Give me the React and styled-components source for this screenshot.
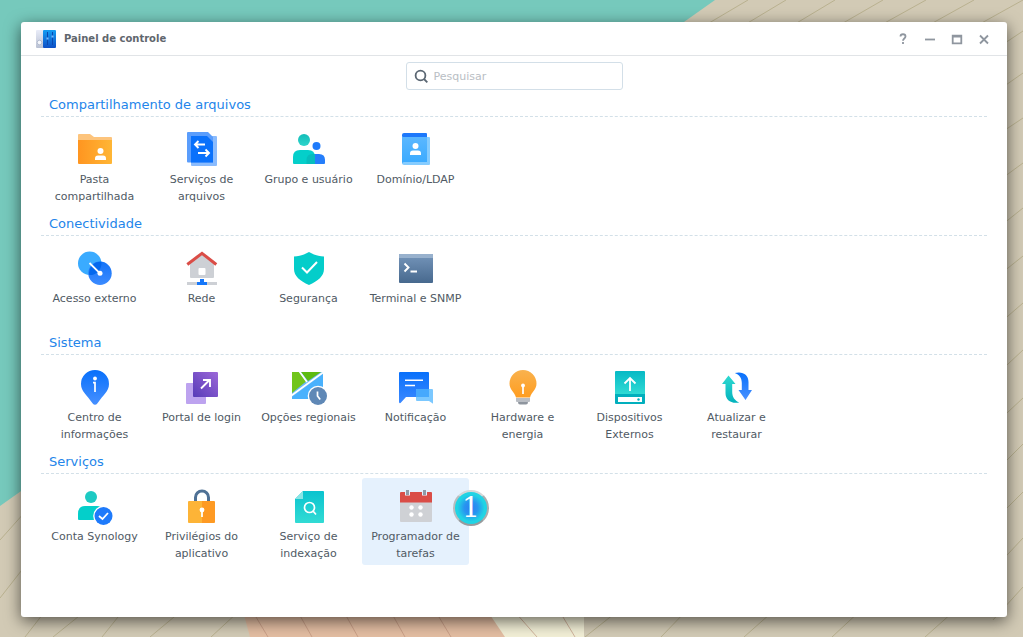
import React from 'react'
import styled, { createGlobalStyle } from 'styled-components'

const GlobalStyle = createGlobalStyle`
  * {
    box-sizing: border-box;
  }
  body {
    margin: 0;
    font-family: "DejaVu Sans", Verdana, sans-serif;
    font-size: 11px;
    color: #505a64;
  }
  button, input {
    font: inherit;
    color: inherit;
  }
`

const Desktop = styled.div`
  display: grid;
  grid-template-columns: minmax(0, 1fr);
  min-height: 100vh;
  background: #cfc8b2;
`

const WallpaperArt = styled.svg`
  grid-area: 1 / 1;
  width: 100%;
  height: 0;
  min-height: 100%;
`

const Window = styled.main`
  grid-area: 1 / 1;
  z-index: 1;
  display: flex;
  flex-direction: column;
  margin: 22px 16px 20px 21px;
  background: #fff;
  border-radius: 3px;
  box-shadow: 0 4px 16px rgba(0, 0, 0, 0.6);
`

const TitleBar = styled.header`
  display: flex;
  align-items: center;
  height: 34px;
  padding: 0 15px;
  border-bottom: 1px solid #e1e4e7;
`

const Title = styled.h1`
  flex: 1;
  margin: 0 0 0 8px;
  font-size: 10px;
  font-weight: 700;
  color: #5f666d;
`

const WindowControls = styled.div`
  display: flex;
  gap: 11px;
`

const ControlButton = styled.button`
  display: flex;
  width: 16px;
  height: 16px;
  padding: 0;
  border: none;
  background: none;
  color: #8f969f;
`

const Toolbar = styled.div`
  display: flex;
  justify-content: center;
  padding: 6px 0 7px;
`

const SearchBox = styled.label`
  display: flex;
  align-items: center;
  gap: 5px;
  width: 217px;
  height: 28px;
  padding: 0 7px;
  border: 1px solid #d3dfe8;
  border-radius: 3px;
`

const SearchInput = styled.input`
  flex: 1;
  min-width: 0;
  padding: 0;
  border: none;
  outline: none;
  background: none;
  &::placeholder {
    color: #b9bec4;
    opacity: 1;
  }
`

const Content = styled.div`
  display: flex;
  flex-direction: column;
  gap: 8px;
  padding: 0 20px 20px;
`

const SectionTitle = styled.h2`
  margin: 0 0 4px;
  padding: 0 8px 3px;
  border-bottom: 1px dashed #d3e0e8;
  font-size: 13px;
  font-weight: 400;
  line-height: 16px;
  color: #2385ea;
`

const Tiles = styled.div`
  display: flex;
  flex-wrap: wrap;
`

const Tile = styled.button`
  position: relative;
  display: flex;
  flex-direction: column;
  align-items: center;
  gap: 4px;
  width: 107px;
  min-height: 87px;
  padding: 10px 4px 3px;
  border: none;
  border-radius: 3px;
  background: ${props => props.$active ? '#e5f1fd' : 'none'};
  line-height: 17px;
  text-align: center;
`

const Badge = styled.span`
  position: absolute;
  top: 12px;
  left: 91px;
  display: flex;
  align-items: center;
  justify-content: center;
  width: 36px;
  height: 36px;
  border: 2px solid;
  border-color: #d3d7d8 #a9adaf #979b9d #b9bdbf;
  border-radius: 50%;
  background: radial-gradient(circle, #2b7ff2 0%, #2894f0 30%, #20d4e4 60%);
  color: #fff;
  font-family: "DejaVu Serif", serif;
  font-size: 28px;
  line-height: 32px;
`

const Gradient = ({ id, from, to, flat }) => (
  <linearGradient id={id} x1='0' y1='0' x2={flat ? 1 : 0} y2={flat ? 0 : 1}>
    <stop stopColor={from} />
    <stop offset='1' stopColor={to} />
  </linearGradient>
)

const Icon = ({ children }) => (
  <svg width='36' height='36' viewBox='0 0 36 36' fill='none' overflow='visible' aria-hidden='true'>{children}</svg>
)

const SharedFolderIcon = () => (
  <Icon>
    <Gradient id='folder' from='#ff9520' to='#ffb635' flat />
    <path d='M1 4a1 1 0 0 1 1-1h11l4 3h17a1 1 0 0 1 1 1v8H1z' fill='#fdc47c' />
    <path d='M1 9h34v23a1 1 0 0 1-1 1H2a1 1 0 0 1-1-1z' fill='url(#folder)' />
    <circle cx='23.5' cy='20' r='3' fill='#fff' />
    <path d='M18 29v-1.500q0-3 3-3h5q3 0 3 3V29z' fill='#fff' />
  </Icon>
)

const FileServicesIcon = () => (
  <Icon>
    <path d='M7 5h25q1 0 1 1v28a1 1 0 0 1-1 1H8a1 1 0 0 1-1-1z' fill='#8abbfd' />
    <path d='M3 2a1 1 0 0 1 1-1h20l5 5v25.500H4a1 1 0 0 1-1-1z' fill='#5a9dfc' />
    <path d='M7 5h16l6 6v20.500H7z' fill='#0a71fb' />
    <path d='M21 13.500H11M14.500 10L11 13.500l3.500 3.500M14 22h11M21.500 18.500L25 22l-3.500 3.500' stroke='#fff' strokeWidth='1.900' />
  </Icon>
)

const UsersIcon = () => (
  <Icon>
    <Gradient id='userHead' from='#13bdb8' to='#2ed5cc' />
    <circle cx='25.500' cy='15' r='4' fill='#1f7bfb' />
    <path d='M15 33v-4q0-6 6-6h7q6 0 6 6v3q0 1-1 1z' fill='#257efb' />
    <circle cx='13' cy='9' r='6' fill='url(#userHead)' />
    <path d='M2 32v-6q0-7 7-7h8q7 0 7 7v7H3q-1 0-1-1z' fill='#04cfca' />
    <path d='M15.500 33v-4q0-6 6-6h1.800q.7 1.500.7 3v7z' fill='#06bdbd' />
  </Icon>
)

const DomainIcon = () => (
  <Icon>
    <Gradient id='book' from='#5cb8ff' to='#39aaff' />
    <path d='M4 4q0-2 2-2h22q1 0 1 1v4H4z' fill='#1d78fb' />
    <path d='M4 5q0 1 1 1h26q1 0 1 1v26q0 1-1 1H6q-2 0-2-2z' fill='#85ccff' />
    <path d='M4 5q0 1 1 1h24v25H6q-2 0-2 2z' fill='url(#book)' />
    <circle cx='17.500' cy='15' r='3' fill='#fff' />
    <path d='M12 24v-1.500q0-3 3-3h5q3 0 3 3V24z' fill='#fff' />
  </Icon>
)

const ExternalAccessIcon = () => (
  <Icon>
    <Gradient id='access' from='#1474f8' to='#3c8bff' />
    <circle cx='12.700' cy='13.300' r='11.700' fill='#3aabff' />
    <circle cx='23' cy='23.300' r='11.700' fill='url(#access)' />
    <path d='M12.200 25A11.700 11.700 0 0 1 24.400 11.700 11.700 11.700 0 0 1 12.200 25z' fill='#0468ee' />
    <path d='M12.500 13L23 23.300' stroke='#fff' strokeWidth='1.800' />
    <circle cx='23' cy='23.300' r='2.500' fill='#fff' />
  </Icon>
)

const NetworkIcon = () => (
  <Icon>
    <path d='M6 13L18 4l12 9v14q0 1-1 1H7q-1 0-1-1z' fill='#cdd0d5' />
    <path d='M14.500 24v-5q0-1 1-1h5q1 0 1 1v5q0 1-1 1h-5q-1 0-1-1z' fill='#fff' />
    <path d='M3.300 14.500L18 3.300l14.300 11.200' stroke='#da4d47' strokeWidth='3' />
    <path d='M3 32h30v3H3z' fill='#cdd0d5' />
    <path d='M13 32h3v-3h4v3h3v3H13z' fill='#1577fa' />
  </Icon>
)

const SecurityIcon = () => (
  <Icon>
    <path d='M18 2C13 5 8 6.500 3 6.500V19c0 7 6 12 15 16 9-4 15-9 15-16V6.500C28 6.500 23 5 18 2z' fill='#04cdca' />
    <path d='M11 17.500l5 5 10-10.500' stroke='#fff' strokeWidth='2' />
  </Icon>
)

const TerminalIcon = () => (
  <Icon>
    <Gradient id='terminal' from='#7595ba' to='#47698e' />
    <rect x='1' y='4' width='34' height='29' rx='1' fill='url(#terminal)' />
    <path d='M1 8V5q0-1 1-1h32q1 0 1 1v3z' fill='#98b1cd' />
    <path d='M6.500 13.500l4 4-4 4M12.500 21.500h6.500' stroke='#fff' strokeWidth='1.900' />
  </Icon>
)

const InfoIcon = () => (
  <Icon>
    <Gradient id='info' from='#0870fb' to='#4790ff' />
    <path d='M18 1a14 14 0 0 1 14 14c0 7.500-6 11-11.500 19.300q-2.500 3-5 0C10 26 4 22.500 4 15A14 14 0 0 1 18 1z' fill='url(#info)' />
    <circle cx='18' cy='9.500' r='1.900' fill='#fff' />
    <path d='M16 13.700h2V23' stroke='#fff' strokeWidth='1.700' />
  </Icon>
)

const LoginPortalIcon = () => (
  <Icon>
    <linearGradient id='portal' x1='0' y1='1' x2='1' y2='0'>
      <stop stopColor='#573bb8' />
      <stop offset='1' stopColor='#9c68d8' />
    </linearGradient>
    <rect x='2' y='14' width='20' height='21' rx='1' fill='#bda3ef' />
    <rect x='9' y='3' width='25' height='25' rx='1' fill='url(#portal)' />
    <path d='M17 19.500l8.500-8.500M19 11h7v7' stroke='#fff' strokeWidth='1.900' />
  </Icon>
)

const RegionalIcon = () => (
  <Icon>
    <path d='M1 3h31v27H1z' fill='#6cb9fb' />
    <path d='M1 30V28L32 5v25z' fill='#49b1fd' />
    <path d='M1 3h7l7 9.500L1 24z' fill='#71c51b' />
    <path d='M10 3h20L17 12z' fill='#5dbb11' />
    <path d='M.500 26.500L32 3.500M8.500 2.500L16 13' stroke='#fff' strokeWidth='1.700' />
    <circle cx='27' cy='27' r='10.300' fill='#fff' />
    <circle cx='27' cy='27' r='9' fill='#5f88b6' />
    <path d='M26.500 22.500V27l2.700 3.500' stroke='#fff' strokeWidth='1.700' />
  </Icon>
)

const NotificationIcon = () => (
  <Icon>
    <Gradient id='bubble' from='#0870fb' to='#3c89ff' />
    <path d='M1 4q0-1 1-1h28q1 0 1 1v24H8l-5.500 6Q1 34.500 1 33z' fill='url(#bubble)' />
    <path d='M19 20h15q1 0 1 1v13q0 1-1 0l-3-2H19q-1 0-1-1V21q0-1 1-1z' fill='#7bc8ff' />
    <path d='M18 21q0-1 1-1h12v8H18z' fill='#46a9fd' />
    <path d='M7 11.200h18M7 16.500h10' stroke='#fff' strokeWidth='1.600' />
  </Icon>
)

const HardwareIcon = () => (
  <Icon>
    <Gradient id='bulb' from='#f9b24e' to='#ff9d20' />
    <path d='M18 1a13.500 13.500 0 0 1 13.500 13.500c0 6.500-5 8-6.500 14H11c-1.500-6-6.500-7.500-6.500-14A13.500 13.500 0 0 1 18 1z' fill='url(#bulb)' />
    <path d='M11 29h14v3q0 1-1 1H12q-1 0-1-1z' fill='#b9bdc3' />
    <path d='M13 33h10q0 2.500-2 2.500h-6q-2 0-2-2.500z' fill='#8e959e' />
    <circle cx='18' cy='16.500' r='1.900' fill='#fff' />
    <path d='M18 17v8' stroke='#fff' strokeWidth='1.700' />
  </Icon>
)

const ExternalDevicesIcon = () => (
  <Icon>
    <Gradient id='device' from='#06b9c5' to='#32dcd5' />
    <path d='M3 3q0-1 1-1h28q1 0 1 1v23H3z' fill='url(#device)' />
    <path d='M3 25h30v9q0 1-1 1H4q-1 0-1-1z' fill='#02afbd' />
    <path d='M6 28h24v5H6z' fill='#fff' />
    <circle cx='26.500' cy='30.500' r='1.200' fill='#02afbd' />
    <path d='M18 22V9.500M12.500 14.500L18 9l5.500 5.500' stroke='#fff' strokeWidth='1.800' />
  </Icon>
)

const UpdateIcon = () => (
  <Icon>
    <Gradient id='updateUp' from='#2fd9d0' to='#03b2bd' />
    <Gradient id='updateDown' from='#0870fb' to='#4b92ff' />
    <path d='M9.500 6.500L16.500 15h-3.300v8c0 5 2.500 8.500 7 10.500C12 35 6.500 31 6.500 24v-9H3z' fill='url(#updateUp)' />
    <path d='M26.500 31L19.500 21h3.300v-7c0-5-2.500-8.500-7-10C24 2 29.500 6 29.500 13v8H33z' fill='url(#updateDown)' />
  </Icon>
)

const AccountIcon = () => (
  <Icon>
    <circle cx='14' cy='9' r='6' fill='#1dcac3' />
    <path d='M1 31v-5q0-8 7-8h12q6 0 6 7v7H2q-1 0-1-1z' fill='#04cfca' />
    <circle cx='26.500' cy='28' r='10.300' fill='#fff' />
    <circle cx='26.500' cy='28' r='9' fill='#1e7afb' />
    <path d='M22 28l3.500 3 5.500-6' stroke='#fff' strokeWidth='1.800' />
  </Icon>
)

const PrivilegesIcon = () => (
  <Icon>
    <path d='M11.500 14V9.500a6.500 6.500 0 0 1 13 0V14' stroke='#4f7195' strokeWidth='3' />
    <path d='M4 14q0-1 1-1h13v22H5q-1 0-1-1z' fill='#fdb437' />
    <path d='M18 13h12q1 0 1 1v20q0 1-1 1H18z' fill='#fe9a23' />
    <circle cx='18' cy='22' r='2.400' fill='#fff' />
    <path d='M18 22v7' stroke='#fff' strokeWidth='1.800' />
  </Icon>
)

const IndexingIcon = () => (
  <Icon>
    <Gradient id='index' from='#0ac3cf' to='#32dbd4' />
    <path d='M12 3h20q1 0 1 1v30q0 1-1 1H5q-1 0-1-1V11z' fill='url(#index)' />
    <path d='M12 3v8H4z' fill='#8be5e5' />
    <circle cx='18.500' cy='19.500' r='5' stroke='#fff' strokeWidth='1.700' />
    <path d='M22 23l3 3.500' stroke='#fff' strokeWidth='1.700' />
  </Icon>
)

const SchedulerIcon = () => (
  <Icon>
    <path d='M2 14h32v19q0 1-1 1H3q-1 0-1-1z' fill='#cfd1d5' />
    <path d='M2 5q0-1 1-1h30q1 0 1 1v9.500H2z' fill='#da4d47' />
    <path d='M9.500 2v5.500M26.500 2v5.500' stroke='#e5f1fd' strokeWidth='5' />
    <path d='M9.500 2v5M26.500 2v5' stroke='#8f9ba8' strokeWidth='3' />
    <g fill='#fff'>
      <circle cx='13.500' cy='19.500' r='2.200' />
      <circle cx='22.500' cy='19.500' r='2.200' />
      <circle cx='13.500' cy='26.500' r='2.200' />
      <circle cx='22.500' cy='26.500' r='2.200' />
    </g>
  </Icon>
)

const ControlPanelIcon = () => (
  <svg width='20' height='20' viewBox='0 0 20 20' aria-hidden='true'>
    <Gradient id='panelLeft' from='#e9ecf8' to='#b9c1d3' />
    <Gradient id='panelRight' from='#159df3' to='#0d4fc6' />
    <rect y='1' width='8' height='18' rx='1' fill='url(#panelLeft)' />
    <rect x='7' y='1' width='13' height='18' rx='1' fill='url(#panelRight)' />
    <circle cx='3.500' cy='13.500' r='2.300' fill='#f4f6fb' stroke='#b4bdd0' />
    <path d='M11.500 3v13M16.500 3v13' stroke='#0a48b0' />
    <path d='M10.500 9.500h2M15.500 7.500h2' stroke='#78bbff' strokeWidth='2' />
  </svg>
)

const SearchIcon = () => (
  <svg width='15' height='15' viewBox='0 0 15 15' fill='none' stroke='#5a6672' strokeWidth='1.800' aria-hidden='true'>
    <circle cx='6.500' cy='6.500' r='4.900' />
    <path d='M10 10l3.300 3.300' />
  </svg>
)

const controls = [
  { label: 'Ajuda', d: 'M5.500 5.500C5.500 2.500 10.500 2.500 10.500 5.500 10.500 7.500 8 7.500 8 9.800M8 11v2' },
  { label: 'Minimizar', d: 'M3 8.500h10' },
  { label: 'Maximizar', d: 'M3.700 4.700h8.600v7.600H3.700zM3 5.500h10' },
  { label: 'Fechar', d: 'M4 4.500l8 8M12 4.500l-8 8' }
]

const sections = [
  {
    title: 'Compartilhamento de arquivos',
    items: [
      { label: 'Pasta compartilhada', icon: SharedFolderIcon },
      { label: 'Serviços de arquivos', icon: FileServicesIcon },
      { label: 'Grupo e usuário', icon: UsersIcon },
      { label: 'Domínio/LDAP', icon: DomainIcon }
    ]
  },
  {
    title: 'Conectividade',
    items: [
      { label: 'Acesso externo', icon: ExternalAccessIcon },
      { label: 'Rede', icon: NetworkIcon },
      { label: 'Segurança', icon: SecurityIcon },
      { label: 'Terminal e SNMP', icon: TerminalIcon }
    ]
  },
  {
    title: 'Sistema',
    items: [
      { label: 'Centro de informações', icon: InfoIcon },
      { label: 'Portal de login', icon: LoginPortalIcon },
      { label: 'Opções regionais', icon: RegionalIcon },
      { label: 'Notificação', icon: NotificationIcon },
      { label: 'Hardware e energia', icon: HardwareIcon },
      { label: 'Dispositivos Externos', icon: ExternalDevicesIcon },
      { label: 'Atualizar e restaurar', icon: UpdateIcon }
    ]
  },
  {
    title: 'Serviços',
    items: [
      { label: 'Conta Synology', icon: AccountIcon },
      { label: 'Privilégios do aplicativo', icon: PrivilegesIcon },
      { label: 'Serviço de indexação', icon: IndexingIcon },
      { label: 'Programador de tarefas', icon: SchedulerIcon, badge: '1' }
    ]
  }
]

// wooden boards over a teal wall
const Wallpaper = () => (
  <WallpaperArt viewBox='0 0 1023 637' preserveAspectRatio='xMidYMid slice' aria-hidden='true'>
    <path d='M0 0h1023v637H0z' fill='#d2cab5' />
    <path d='M0 0h715L0 506z' fill='#76c9bc' />
    <path d='M240 600h245l24 37H250z' fill='#e3bda2' />
    <path d='M480 600h104v37h-79z' fill='#f2efd6' />
    <g stroke='#aaa278' strokeWidth='1' opacity='0.6'>
      <path d='M748 0l-44 26M786 0l-50 30M835 0l-50 30M883 0l-52 30M926 0l-54 30M974 0l-54 30M1023 0l-54 30' />
      <path d='M1023 31l-30 20M1023 73l-30 21M1023 118l-30 20M1023 163l-30 22M1023 208l-30 24M1023 256l-30 24M1023 303l-30 26M1023 350l-30 28M1023 398l-30 28M1023 444l-30 30M1023 492l-30 30M1023 538l-30 32M1023 587l-30 33' />
      <path d='M25 512L0 540M25 566L0 598M46 610l-21 27M84 612l-31 25M122 612l-20 25M180 612l-30 25M238 612l-27 25' />
      <path d='M614 614l-29 23M687 610l-26 27M779 606l-35 31M861 610l-29 27M953 612l-28 25' />
    </g>
    <path d='M253 612l15 25M298 612l14 25M344 612l14 25M391 612l14 25M436 612l15 25M515 612l22 25M560 612l15 25' stroke='#bb8d77' opacity='0.6' />
  </WallpaperArt>
)

const App = () => (
  <>
    <GlobalStyle />
    <Desktop>
      <Wallpaper />
      <Window>
        <TitleBar>
          <ControlPanelIcon />
          <Title>Painel de controle</Title>
          <WindowControls>
            {controls.map(control => (
              <ControlButton type='button' key={control.label} aria-label={control.label}>
                <svg width='16' height='16' viewBox='0 0 16 16' fill='none' stroke='currentColor' strokeWidth='1.800'>
                  <path d={control.d} />
                </svg>
              </ControlButton>
            ))}
          </WindowControls>
        </TitleBar>
        <Toolbar>
          <SearchBox>
            <SearchIcon />
            <SearchInput type='text' placeholder='Pesquisar' aria-label='Pesquisar' />
          </SearchBox>
        </Toolbar>
        <Content>
          {sections.map(section => (
            <section key={section.title}>
              <SectionTitle>{section.title}</SectionTitle>
              <Tiles>
                {section.items.map(({ label, icon: TileIcon, badge }) => (
                  <Tile type='button' key={label} $active={Boolean(badge)}>
                    <TileIcon />
                    {label}
                    {badge && <Badge>{badge}</Badge>}
                  </Tile>
                ))}
              </Tiles>
            </section>
          ))}
        </Content>
      </Window>
    </Desktop>
  </>
)

export default App
